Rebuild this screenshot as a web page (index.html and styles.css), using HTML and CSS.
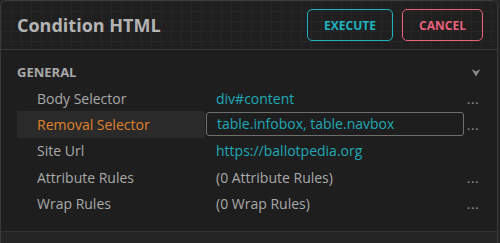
FILE: index.html
```html
<!DOCTYPE html>
<html lang="en">
<head>
    <meta charset="UTF-8">
    <title>Condition HTML</title>
    <link rel="stylesheet" href="styles.css">
</head>
<body>
    <div class="panel">
        <div class="header">
            <h1>Condition HTML</h1>
            <div class="actions">
                <button class="btn execute">EXECUTE</button>
                <button class="btn cancel">CANCEL</button>
            </div>
        </div>

        <div class="section">
            <div class="section-title">
                <span>GENERAL</span>
                <svg class="chevron" width="10" height="9" viewBox="0 0 10 9">
                    <path d="M0.5 1 L5 3.5 L9.5 1 L5 8.5 Z" fill="#8a8a8a"/>
                </svg>
            </div>

            <div class="row">
                <div class="label">Body Selector</div>
                <div class="value link">div#content</div>
                <div class="more">...</div>
            </div>
            <div class="row active">
                <div class="label">Removal Selector</div>
                <div class="value"><div class="input">table.infobox, table.navbox</div></div>
                <div class="more">...</div>
            </div>
            <div class="row">
                <div class="label">Site Url</div>
                <div class="value link">https://ballotpedia.org</div>
                <div class="more"></div>
            </div>
            <div class="row">
                <div class="label">Attribute Rules</div>
                <div class="value">(0 Attribute Rules)</div>
                <div class="more">...</div>
            </div>
            <div class="row">
                <div class="label">Wrap Rules</div>
                <div class="value">(0 Wrap Rules)</div>
                <div class="more">...</div>
            </div>
        </div>
        <div class="footer"></div>
    </div>
</body>
</html>
```

FILE: styles.css
```css
body, html {
    margin: 0;
    padding: 0;
    height: 100%;
    background: #252525;
    font-family: 'Open Sans', sans-serif;
    color: #a9a9a9;
}
.panel {
    width: 498px;
    height: 243px;
    border: 1px solid #3a3a3a;
    border-bottom: none;
    border-radius: 6px 6px 0 0;
    background: #1e1e1e;
    overflow: hidden;
    box-sizing: border-box;
    display: flex;
    flex-direction: column;
}
.header {
    height: 48px;
    flex-shrink: 0;
    display: flex;
    align-items: center;
    justify-content: space-between;
    padding: 0 14px 0 16px;
    border-bottom: 1px solid #3a3a3a;
    background-color: #1f1f1f;
    background-image:
        linear-gradient(to right, #262626 1px, transparent 1px),
        linear-gradient(to bottom, #262626 1px, transparent 1px);
    background-size: 10px 10px;
}
h1 {
    margin: 0;
    font-size: 18px;
    font-weight: bold;
    color: #b4b4b4;
}
.actions {
    display: flex;
    gap: 9px;
}
.btn {
    background: transparent;
    border-radius: 5px;
    height: 32px;
    font-family: 'Open Sans', sans-serif;
    font-size: 12px;
    font-weight: bold;
    cursor: pointer;
    padding: 0;
}
.execute {
    width: 86px;
    border: 1px solid #1fb3c0;
    color: #1fb3c0;
}
.cancel {
    width: 81px;
    border: 1px solid #e8607a;
    color: #e8607a;
}
.section {
    flex: 1;
    padding: 10px 15px 0 16px;
    border-bottom: 1px solid #333;
}
.section-title {
    display: flex;
    justify-content: space-between;
    align-items: center;
    height: 24px;
    margin-bottom: 1px;
    font-size: 13px;
    font-weight: bold;
    color: #a9a9a9;
    padding-right: 1px;
}
.row {
    display: flex;
    align-items: center;
    height: 26.3px;
    font-size: 14px;
}
.label {
    width: 168px;
    padding-left: 20px;
    height: 100%;
    display: flex;
    align-items: center;
}
.row.active .label {
    background: #2a2a2a;
    color: #e0822c;
}
.value {
    flex: 1;
    padding-left: 11px;
    color: #a9a9a9;
}
.value.link {
    color: #1fa9b6;
}
.row.active .value {
    padding-left: 1px;
}
.input {
    height: 22px;
    line-height: 21px;
    border: 1px solid #6e6e6e;
    border-radius: 3px;
    padding-left: 10px;
    color: #1fa9b6;
}
.more {
    width: 18px;
    box-sizing: border-box;
    padding-left: 3px;
    padding-top: 3px;
    font-size: 11px;
    font-weight: bold;
    letter-spacing: 1px;
    color: #8a8a8a;
}
.footer {
    height: 11px;
    background: #252525;
}
```
